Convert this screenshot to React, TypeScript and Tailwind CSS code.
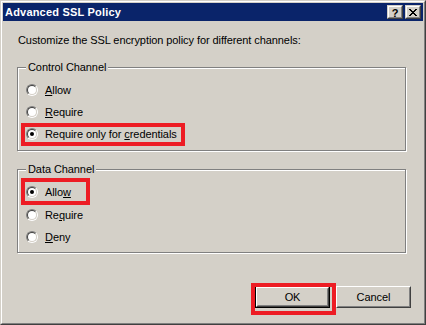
import React from "react";

function Radio({ checked }: { checked?: boolean }) {
  return (
    <div className="w-[12px] h-[12px] rounded-full border border-t-[#808080] border-l-[#808080] border-r-white border-b-white shrink-0">
      <div className="w-full h-full rounded-full border border-t-[#404040] border-l-[#404040] border-r-[#d4d0c8] border-b-[#d4d0c8] bg-white flex items-center justify-center">
        {checked && <div className="w-[4px] h-[4px] rounded-full bg-black" />}
      </div>
    </div>
  );
}

function Row({ checked, children, className = "" }: { checked?: boolean; children: React.ReactNode; className?: string }) {
  return (
    <div className={"flex items-center h-[16px] " + className}>
      <Radio checked={checked} />
      <span className="ml-[7px] leading-[13px]">{children}</span>
    </div>
  );
}

function Group({ title, children, className = "" }: { title: string; children: React.ReactNode; className?: string }) {
  return (
    <div className={"relative w-[389px] h-[84px] border border-[#808080] shadow-[inset_1px_1px_0_#fff,1px_1px_0_#fff] pl-[8px] " + className}>
      <span className="absolute left-[8px] top-[-7px] px-[2px] bg-[#d4d0c8] leading-[13px]">{title}</span>
      {children}
    </div>
  );
}

function Btn({ children, isDefault }: { children: React.ReactNode; isDefault?: boolean }) {
  return (
    <div className={"w-[75px] h-[22px] " + (isDefault ? "border border-black" : "")}>
      <div className="w-full h-full border border-t-white border-l-white border-r-[#404040] border-b-[#404040]">
        <div className="w-full h-full border border-t-[#d4d0c8] border-l-[#d4d0c8] border-r-[#808080] border-b-[#808080] flex items-center justify-center leading-[13px]">
          {children}
        </div>
      </div>
    </div>
  );
}

function CapBtn({ children }: { children: React.ReactNode }) {
  return (
    <div className="w-[16px] h-[14px] bg-[#d4d0c8] border border-t-[#d4d0c8] border-l-[#d4d0c8] border-r-[#404040] border-b-[#404040]">
      <div className="w-full h-full border border-t-white border-l-white border-r-[#808080] border-b-[#808080] flex items-center justify-center">
        {children}
      </div>
    </div>
  );
}

export default function App() {
  return (
    <div className="relative w-[426px] h-[325px] bg-[#d4d0c8] border border-t-[#d4d0c8] border-l-[#d4d0c8] border-r-[#404040] border-b-[#404040] font-['Liberation_Sans',Arial,sans-serif] text-[11px] tracking-[-0.08px] text-black">
      <div className="w-full h-full border border-t-white border-l-white border-r-[#808080] border-b-[#808080] p-px flex flex-col">
        <div className="h-[18px] bg-[#0a246a] flex items-center justify-between pl-[2px] pr-[2px]">
          <span className="text-white font-bold text-[11px] leading-[14px] tracking-[0.2px]">Advanced SSL Policy</span>
          <div className="flex gap-[2px]">
            <CapBtn>
              <span className="font-bold text-[11px] leading-[10px] mt-[1px]">?</span>
            </CapBtn>
            <CapBtn>
              <svg width="8" height="7" viewBox="0 0 8 7" shapeRendering="crispEdges">
                <rect x="0" y="0" width="2" height="1" fill="#000" />
                <rect x="6" y="0" width="2" height="1" fill="#000" />
                <rect x="1" y="1" width="2" height="1" fill="#000" />
                <rect x="5" y="1" width="2" height="1" fill="#000" />
                <rect x="2" y="2" width="4" height="1" fill="#000" />
                <rect x="3" y="3" width="2" height="1" fill="#000" />
                <rect x="2" y="4" width="4" height="1" fill="#000" />
                <rect x="1" y="5" width="2" height="1" fill="#000" />
                <rect x="5" y="5" width="2" height="1" fill="#000" />
                <rect x="0" y="6" width="2" height="1" fill="#000" />
                <rect x="6" y="6" width="2" height="1" fill="#000" />
              </svg>
            </CapBtn>
          </div>
        </div>
        <div className="pl-[14px] flex flex-col">
          <div className="mt-[13px] leading-[13px] pl-px">Customize the SSL encryption policy for different channels:</div>
          <Group title="Control Channel" className="mt-[20px] pt-[14px]">
            <Row>
              <span className="underline">A</span>llow
            </Row>
            <Row className="mt-[6px]">
              <span className="underline">R</span>equire
            </Row>
            <Row className="mt-[6px]" checked>
              Require only for <span className="underline">c</span>redentials
            </Row>
          </Group>
          <Group title="Data Channel" className="mt-[18px] pt-[14px]">
            <Row checked>
              Allo<span className="underline">w</span>
            </Row>
            <Row className="mt-[7px]">
              Re<span className="underline">q</span>uire
            </Row>
            <Row className="mt-[6px]">
              <span className="underline">D</span>eny
            </Row>
          </Group>
          <div className="mt-[33px] flex justify-end gap-[6px] pr-[12px]">
            <Btn isDefault>OK</Btn>
            <Btn>Cancel</Btn>
          </div>
        </div>
      </div>
      <div className="absolute left-[20px] top-[122px] w-[164px] h-[23px] border-4 border-[#ed1c24]" />
      <div className="absolute left-[20px] top-[177px] w-[69px] h-[27px] border-4 border-[#ed1c24]" />
      <div className="absolute left-[250px] top-[282px] w-[85px] h-[32px] border-4 border-[#ed1c24]" />
    </div>
  );
}
